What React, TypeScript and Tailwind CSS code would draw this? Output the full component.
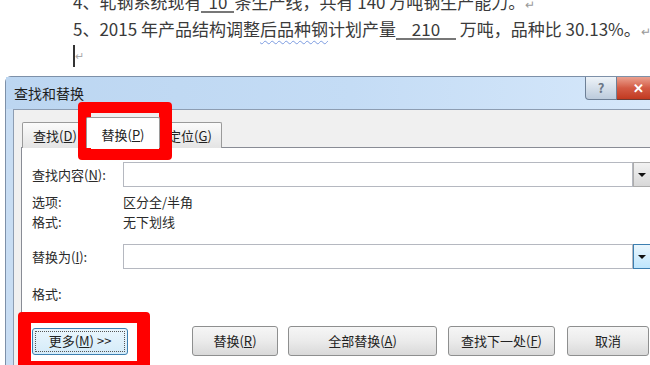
import type { ReactNode } from "react";

/** 按钮：Win7 风格的灰色渐变按钮。 */
function Btn({ children, className = "" }: { children: ReactNode; className?: string }) {
  return (
    <div
      className={
        "flex h-[30px] shrink-0 items-center justify-center rounded-[3px] border border-[#8e8f8f] bg-linear-to-b from-[#f6f6f6] via-[#ebebeb] to-[#d9d9d9] text-[13px] text-[#222] " +
        className
      }
    >
      {children}
    </div>
  );
}

function Drop({ hot = false }: { hot?: boolean }) {
  return (
    <div
      className={
        "flex h-[25px] w-[18px] shrink-0 items-center justify-center border " +
        (hot
          ? "border-[#3c7fb1] bg-linear-to-b from-[#eaf6fd] to-[#bee6fd]"
          : "border-[#acacac] bg-linear-to-b from-[#f2f2f2] to-[#d8d8d8]")
      }
    >
      <span className="block h-0 w-0 border-x-[4px] border-t-[4px] border-x-transparent border-t-[#111]" />
    </div>
  );
}

/** 查找和替换对话框截图复刻。 */
export default function App() {
  return (
    <div className="relative h-[365px] w-[650px] overflow-hidden bg-white font-['Microsoft_YaHei','Noto_Sans_CJK_SC',sans-serif]">
      {/* 文档正文 */}
      <div className="mt-[-11px] whitespace-nowrap pl-[73px] text-[17px] leading-[25px] text-[#3a3a3a]">
        <div>
          4、轧钢系统现有
          <span className="inline-block w-[33px] border-b-2 border-[#777] text-center leading-[19px]">10</span>
          条生产线，共有 140 万吨钢生产能力。<span className="text-[12px] text-[#999]">↵</span>
        </div>
        <div>
          5、2015 年产品结构调整
          <span className="underline decoration-[#7b9be0] decoration-wavy decoration-1 underline-offset-4">后品种钢</span>
          计划产量
          <span className="inline-block w-[60px] border-b-2 border-[#777] text-center leading-[19px]">210</span>
          {" "}万吨，品种比 30.13%。<span className="text-[12px] text-[#999]">↵</span>
        </div>
        <div className="flex h-[25px] items-center">
          <span className="block h-[22px] w-[2px] bg-[#333]" />
          <span className="text-[11px] leading-none text-[#aaa]">↵</span>
        </div>
      </div>

      {/* 对话框 */}
      <div className="ml-[5px] mt-[8px] w-[690px] rounded-t-[6px] border border-[#7d90a8] bg-[#c8ddf3]">
        <div className="flex h-[32px] items-start bg-linear-to-r from-[#bcd6f1] via-[#c4dcf5] to-[#d8e9fb]">
          <div className="flex h-full flex-1 items-center pl-[8px] text-[14px] text-[#1e1e1e]">查找和替换</div>
          <div className="mr-[33px] flex">
            <div className="flex h-[23px] w-[32px] items-center justify-center rounded-bl-[4px] border border-t-0 border-[#6d7f96] bg-linear-to-b from-[#eef3f8] to-[#bccbdc] text-[13px] font-bold text-[#6b7686]">
              ?
            </div>
            <div className="flex h-[23px] w-[44px] items-center justify-center border border-l-0 border-t-0 border-[#6d3b34] bg-linear-to-b from-[#eaa08f] via-[#d35a44] to-[#c1391f] text-[13px] font-bold text-white">
              ✕
            </div>
          </div>
        </div>

        <div className="ml-[7px] border-l border-t border-[#8d9db2] bg-[#f0f0f0] pl-[7px] pt-[7px]">
          {/* 选项卡 */}
          <div className="flex h-[31px] items-end pl-[1px] text-[13px] text-[#222]">
            <div className="flex h-[26px] w-[66px] items-center justify-center rounded-t-[2px] border border-b-0 border-[#9a9a9a] bg-linear-to-b from-[#fbfbfb] to-[#e4e4e4]">
              查找(<u>D</u>)
            </div>
            <div className="relative z-10 -mx-[2px] flex h-[31px] w-[74px] items-start justify-center rounded-t-[2px] border border-b-0 border-[#9a9a9a] bg-white pt-[7px]">
              替换(<u>P</u>)
            </div>
            <div className="flex h-[26px] w-[64px] items-center justify-center rounded-t-[2px] border border-b-0 border-[#9a9a9a] bg-linear-to-b from-[#fbfbfb] to-[#e4e4e4]">
              定位(<u>G</u>)
            </div>
          </div>

          {/* 面板 */}
          <div className="-mt-[1px] w-[660px] border border-[#898c95] bg-white pb-[9px] pl-[10px] pt-[14px] text-[13px] text-[#2a2a2a]">
            <div className="flex h-[25px] items-center">
              <div className="w-[91px]">
                查找内容(<u>N</u>):
              </div>
              <div className="h-[25px] w-[510px] border border-[#b5b8c0] bg-white" />
              <Drop />
            </div>
            <div className="mt-[5px] flex h-[20px] items-center">
              <div className="w-[91px]">选项:</div>
              <div>区分全/半角</div>
            </div>
            <div className="flex h-[20px] items-center">
              <div className="w-[91px]">格式:</div>
              <div>无下划线</div>
            </div>
            <div className="mt-[12px] flex h-[25px] items-center">
              <div className="w-[91px]">
                替换为(<u>I</u>):
              </div>
              <div className="h-[25px] w-[510px] border border-[#b5b8c0] bg-white" />
              <Drop hot />
            </div>
            <div className="mt-[15px] flex h-[20px] items-center">
              <div className="w-[91px]">格式:</div>
            </div>

            <div className="mt-[22px] flex h-[30px] items-center">
              <div className="flex h-[27px] w-[96px] shrink-0 items-center justify-center rounded-[3px] border border-[#3c7fb1] bg-linear-to-b from-[#eaf6fd] to-[#d4ebf9] p-[2px]">
                <div className="flex h-full w-full items-center justify-center border border-dotted border-[#555] text-[13px] text-[#222]">
                  更多(<u>M</u>)&nbsp;&gt;&gt;
                </div>
              </div>
              <Btn className="ml-[64px] w-[86px]">
                替换(<u>R</u>)
              </Btn>
              <Btn className="ml-[10px] w-[149px]">
                全部替换(<u>A</u>)
              </Btn>
              <Btn className="ml-[11px] w-[107px]">
                查找下一处(<u>F</u>)
              </Btn>
              <Btn className="ml-[12px] w-[82px]">取消</Btn>
            </div>
          </div>
        </div>
      </div>

      {/* 红色标注框 */}
      <div className="absolute left-[78px] top-[102px] h-[58px] w-[94px] rounded-[4px] border-x-[13px] border-y-[11px] border-[#ff0000]" />
      <div className="absolute left-[18px] top-[312px] h-[60px] w-[132px] rounded-[4px] border-x-[13px] border-y-[11px] border-[#ff0000]" />
    </div>
  );
}
